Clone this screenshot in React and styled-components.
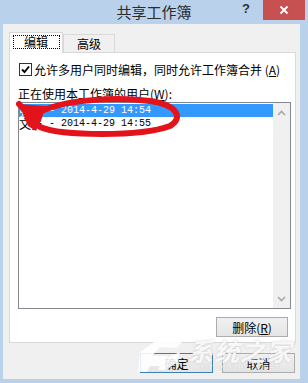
import React from 'react';
import styled, { createGlobalStyle } from 'styled-components';

const GlobalStyle = createGlobalStyle`
  html, body { margin: 0; padding: 0; }
  body {
    width: 308px; height: 383px; overflow: hidden;
    font-family: "Noto Sans CJK SC", "Noto Sans", sans-serif;
  }
`;

const Window = styled.div`
  position: relative;
  width: 308px; height: 383px;
  box-sizing: border-box;
  background: #b9d1ea;
  display: flex; flex-direction: column;
`;

const TitleBar = styled.div`
  height: 24px; flex: none;
  display: grid; grid-template-columns: 1fr auto 1fr;
  align-items: start;
`;

const Title = styled.div`
  grid-column: 2;
  font-size: 15px; line-height: 24px; color: #2b2b2b;
`;

const Controls = styled.div`
  grid-column: 3;
  display: flex; justify-content: flex-end; align-items: flex-start;
  gap: 13px; padding-right: 3px;
`;

const Help = styled.span`
  font: bold 13px/18px "Liberation Sans", sans-serif; color: #333;
`;

const Close = styled.div`
  width: 42px; height: 20px;
  background: #c75050; color: #fff;
  display: flex; align-items: center; justify-content: center;
`;

const Client = styled.div`
  flex: 1;
  margin: 0 8px 4px 3px;
  background: #f0f0f0;
  padding: 8px 4px 6px 6px;
  display: flex; flex-direction: column;
`;

const Tabs = styled.div`
  display: flex; align-items: flex-end;
  height: 21px; margin-bottom: -1px;
  position: relative; z-index: 1;
`;

const Tab = styled.div`
  box-sizing: border-box;
  width: ${p => (p.$active ? 54 : 52)}px;
  height: ${p => (p.$active ? 21 : 18)}px;
  margin-bottom: ${p => (p.$active ? 0 : 1)}px;
  border: 1px solid #d9d9d9; border-bottom: none;
  background: ${p => (p.$active ? '#fff' : '#f0f0f0')};
  font-size: 12px; color: #000;
  display: flex; justify-content: center;
  align-items: ${p => (p.$active ? 'flex-start' : 'center')};
  padding-top: ${p => (p.$active ? 2 : 0)}px;
`;

const Focus = styled.span`
  box-sizing: border-box;
  width: 47px; height: 14px;
  border: 1px dotted #000;
  display: flex; align-items: center; justify-content: center;
  line-height: 12px;
`;

const Panel = styled.div`
  box-sizing: border-box;
  width: 287px; height: 291px; flex: none;
  border: 1px solid #d9d9d9;
  background: #fff;
  padding: 10px 5px 5px 8px;
  display: flex; flex-direction: column;
`;

const CheckRow = styled.div`
  display: flex; align-items: center; gap: 2px;
  height: 13px; margin-left: 1px;
  font-size: 12px; color: #000; white-space: nowrap;
`;

const Box = styled.span`
  box-sizing: border-box;
  width: 13px; height: 13px; flex: none;
  border: 1px solid #333; background: #fff;
  display: flex; align-items: center; justify-content: center;
`;

const Key = styled.span`
  text-decoration: underline;
`;

const Label = styled.div`
  margin-top: 11px;
  font-size: 12px; line-height: 14px; color: #000; white-space: nowrap;
`;

const List = styled.div`
  box-sizing: border-box;
  margin-top: 1px;
  width: 273px; height: 207px; flex: none;
  border: 1px solid #828790;
  display: flex;
`;

const Items = styled.div`
  flex: 1; padding-top: 1px;
`;

const Item = styled.div`
  height: 13px;
  display: flex; align-items: center;
  background: ${p => (p.$selected ? '#3399ff' : 'transparent')};
  color: ${p => (p.$selected ? '#fff' : '#000')};
  white-space: nowrap;
`;

const Name = styled.span`
  font-size: 12px; line-height: 13px;
`;

const Stamp = styled.span`
  font: 10px/13px "Liberation Mono", monospace;
`;

const Scroll = styled.div`
  width: 17px; flex: none;
  background: #f0f0f0;
  display: flex; flex-direction: column; justify-content: space-between; align-items: center;
  padding: 7px 0 6px;
`;

const Button = styled.div`
  box-sizing: border-box;
  width: ${p => p.$w || 73}px; height: ${p => p.$h || 20}px;
  border: 1px solid ${p => (p.$default ? '#3c7fb1' : '#acacac')};
  background: linear-gradient(#f0f0f0, #e5e5e5);
  font-size: 12px; color: #000;
  display: flex; align-items: center; justify-content: center;
`;

const RemoveButton = styled(Button)`
  align-self: flex-end;
  margin-top: 8px; margin-right: 2px;
`;

const Footer = styled.div`
  display: flex; justify-content: flex-end; gap: 9px;
  margin-top: 10px; padding-right: 1px;
`;

const Overlay = styled.svg`
  position: absolute; left: 0; top: 0;
  pointer-events: none;
`;

const Watermark = styled.div`
  position: absolute; left: 188px; top: 336px;
  display: flex; flex-direction: column; align-items: center;
  color: rgba(255, 255, 255, 0.9);
  text-shadow: 0 0 2px rgba(150, 150, 150, 0.5);
  pointer-events: none;
`;

const WmText = styled.span`
  font-size: 25px; line-height: 28px; font-weight: bold; font-style: italic;
  letter-spacing: 1px;
`;

const WmSub = styled.span`
  font: 7px/8px "Liberation Sans", sans-serif; letter-spacing: 1px;
  color: rgba(255, 255, 255, 0.8);
`;

const Chevron = ({ up }) => (
  <svg width="9" height="6" viewBox="0 0 9 6">
    <path d={up ? 'M1 5 L4.5 1.5 L8 5' : 'M1 1 L4.5 4.5 L8 1'} fill="none" stroke="#a8a8a8" strokeWidth="1.6" />
  </svg>
);

export default function App() {
  return (
    <>
      <GlobalStyle />
      <Window>
        <TitleBar>
          <Title>共享工作簿</Title>
          <Controls>
            <Help>?</Help>
            <Close>
              <svg width="10" height="10" viewBox="0 0 10 10">
                <path d="M1.5 1.5 L8.5 8.5 M8.5 1.5 L1.5 8.5" stroke="#fff" strokeWidth="1.8" />
              </svg>
            </Close>
          </Controls>
        </TitleBar>
        <Client>
          <Tabs>
            <Tab $active><Focus>编辑</Focus></Tab>
            <Tab>高级</Tab>
          </Tabs>
          <Panel>
            <CheckRow>
              <Box>
                <svg width="9" height="9" viewBox="0 0 9 9">
                  <path d="M1 4.5 L3.5 7 L8 1.5" fill="none" stroke="#000" strokeWidth="1.9" />
                </svg>
              </Box>
              <span>允许多用户同时编辑，同时允许工作簿合并 (<Key>A</Key>)</span>
            </CheckRow>
            <Label>正在使用本工作簿的用户(<Key>W</Key>):</Label>
            <List>
              <Items>
                <Item $selected><Name>张三</Name><Stamp>&nbsp;- 2014-4-29 14:54</Stamp></Item>
                <Item><Name>文员</Name><Stamp>&nbsp;- 2014-4-29 14:55</Stamp></Item>
              </Items>
              <Scroll>
                <Chevron up />
                <Chevron />
              </Scroll>
            </List>
            <RemoveButton $w={72} $h={21}>删除(<Key>R</Key>)</RemoveButton>
          </Panel>
          <Footer>
            <Button $default>确定</Button>
            <Button>取消</Button>
          </Footer>
        </Client>
        <Overlay width="308" height="383" viewBox="0 0 308 383">
          <path
            d="M40 127 C62 136, 140 137, 170 126 C183 119, 179 105, 150 101 C118 97, 70 99, 44 110"
            fill="none" stroke="#e3131b" strokeWidth="6" strokeLinecap="round"
          />
          <path d="M19 104 L46 106 L42 118 L36 131 L28 126 Z" fill="#e3131b" />
          <path d="M19 104 L30 116" stroke="#e3131b" strokeWidth="6" strokeLinecap="round" />
          <g fill="rgba(255,255,255,0.88)">
            <path d="M140 352 L160 338 L184 340 L176 348 L160 347 L152 356 L168 356 L160 366 L150 366 L147 372 L138 372 Z" />
            <path d="M162 360 L180 352 L178 362 L166 370 L158 370 Z" />
          </g>
        </Overlay>
        <Watermark>
          <WmText>系统之家</WmText>
          <WmSub>XITONGZHIJIA.NET</WmSub>
        </Watermark>
      </Window>
    </>
  );
}
